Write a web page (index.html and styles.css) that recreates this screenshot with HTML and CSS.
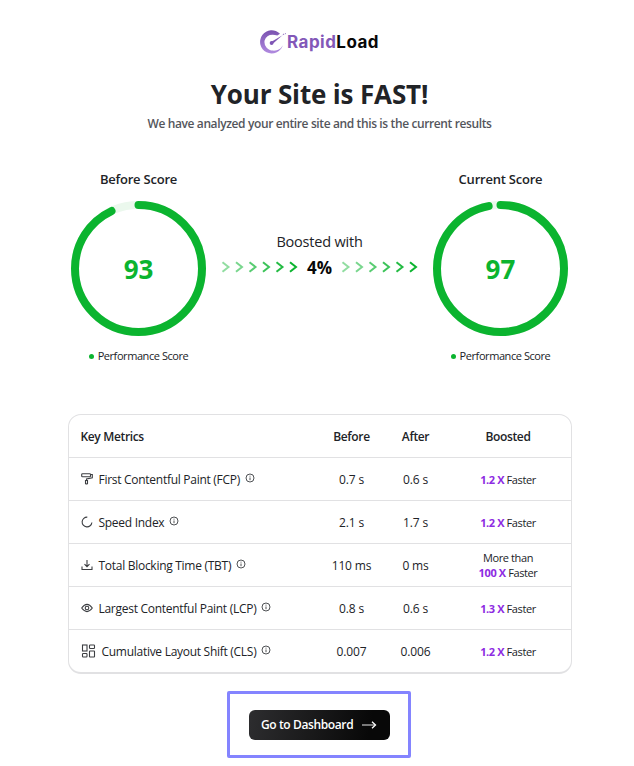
FILE: index.html
```html
<!DOCTYPE html>
<html lang="en">
<head>
<meta charset="utf-8">
<title>RapidLoad</title>
<link rel="stylesheet" href="styles.css">
</head>
<body>
<svg class="defs" width="0" height="0" aria-hidden="true">
  <symbol id="info" viewBox="0 0 10 10"><circle cx="5" cy="5" r="4" /><path d="M5 4.5v2.7M5 2.7v.9" /></symbol>
  <symbol id="chevrons" viewBox="0 0 77 12">
    <path opacity=".45" d="M1.5 1.2l6 4.8-6 4.8" /><path opacity=".55" d="M15 1.2l6 4.8-6 4.8" /><path opacity=".68" d="M28.5 1.2l6 4.8-6 4.8" /><path opacity=".8" d="M42 1.2l6 4.8-6 4.8" /><path opacity=".9" d="M55.5 1.2l6 4.8-6 4.8" /><path d="M69 1.2l6 4.8-6 4.8" />
  </symbol>
</svg>
<main class="page">
  <div class="logo">
    <svg class="logo-mark" width="27" height="26" viewBox="0 0 27 26">
      <defs><linearGradient id="lg" x1="0" y1="0" x2="0" y2="1"><stop offset="0" stop-color="#7a52b0" /><stop offset="1" stop-color="#b18be0" /></linearGradient></defs>
      <path fill="url(#lg)" d="M20 4.800A11.600 11.600 0 1 0 22.800 16.200Q20 22 13 21.600A8.600 8.600 0 0 1 4.600 11.500Q7 3.900 17.300 6.400Z" />
      <path fill="#7f56b5" d="M11 13L22.500 6.200L12.500 15Z" /><circle cx="11.600" cy="14" r="1.900" fill="#7f56b5" />
      <path fill="none" stroke="#8b66bd" stroke-width="1" d="M22.800 5.700l1.200-.7M24.800 5l1-.5" />
    </svg>
    <span class="logo-text"><span class="rapid">Rapid</span>Load</span>
  </div>
  <h1>Your Site is FAST!</h1>
  <p class="subtitle">We have analyzed your entire site and this is the current results</p>
  <section class="scores">
    <div class="score">
      <h2>Before Score</h2>
      <div class="gauge">
        <svg width="135" height="135" viewBox="0 0 135 135"><circle class="track" cx="67.5" cy="67.5" r="63.5" /><circle class="value" cx="67.5" cy="67.5" r="63.5" pathLength="100" stroke-dasharray="93 100" transform="rotate(-90 67.5 67.5)" /></svg>
        <strong>93</strong>
      </div>
      <p class="legend"><i></i><span>Performance Score</span></p>
    </div>
    <div class="boost">
      <p>Boosted with</p>
      <div class="boost-row"><svg class="chevrons" width="77" height="12"><use href="#chevrons" /></svg><strong>4%</strong><svg class="chevrons" width="77" height="12"><use href="#chevrons" /></svg></div>
    </div>
    <div class="score">
      <h2>Current Score</h2>
      <div class="gauge">
        <svg width="135" height="135" viewBox="0 0 135 135"><circle class="track" cx="67.5" cy="67.5" r="63.5" /><circle class="value" cx="67.5" cy="67.5" r="63.5" pathLength="100" stroke-dasharray="97 100" transform="rotate(-90 67.5 67.5)" /></svg>
        <strong>97</strong>
      </div>
      <p class="legend"><i></i><span>Performance Score</span></p>
    </div>
  </section>
  <section class="metrics">
    <div class="row head"><span>Key Metrics</span><span>Before</span><span>After</span><span>Boosted</span></div>
    <div class="row">
      <div class="name"><svg class="icon" width="12" height="12" viewBox="0 0 12 12"><rect x=".7" y=".7" width="8.8" height="3" rx=".8" /><path d="M9.500 1.500h1.800v3.200L5.500 6v1.500M4.500 7.500h2v3q-1 1-2 0z" /></svg><span>First Contentful Paint (FCP)</span><svg class="info" width="10" height="10"><use href="#info" /></svg></div>
      <span>0.7 s</span><span>0.6 s</span><span class="gain"><b>1.2 X</b> Faster</span>
    </div>
    <div class="row">
      <div class="name"><svg class="icon" width="12" height="12" viewBox="0 0 12 12"><path d="M6.300 1.100A4.900 4.900 0 1 0 10.900 6.500" /></svg><span>Speed Index</span><svg class="info" width="10" height="10"><use href="#info" /></svg></div>
      <span>2.1 s</span><span>1.7 s</span><span class="gain"><b>1.2 X</b> Faster</span>
    </div>
    <div class="row">
      <div class="name"><svg class="icon" width="12" height="12" viewBox="0 0 12 12"><path d="M6 1v6.500M3.500 5.200L6 7.700l2.500-2.500M1 7.500v3h10v-3" /></svg><span>Total Blocking Time (TBT)</span><svg class="info" width="10" height="10"><use href="#info" /></svg></div>
      <span>110 ms</span><span>0 ms</span><span class="gain">More than<br><b>100 X</b> Faster</span>
    </div>
    <div class="row">
      <div class="name"><svg class="icon" width="12" height="12" viewBox="0 0 12 12"><path d="M.7 6Q6-1.200 11.300 6Q6 13.200.7 6z" /><circle cx="6" cy="6" r="1.800" /></svg><span>Largest Contentful Paint (LCP)</span><svg class="info" width="10" height="10"><use href="#info" /></svg></div>
      <span>0.8 s</span><span>0.6 s</span><span class="gain"><b>1.3 X</b> Faster</span>
    </div>
    <div class="row">
      <div class="name"><svg class="icon layout" width="15" height="14" viewBox="0 0 15 14"><rect x="1.500" y="1" width="4.500" height="6" /><rect x="8.500" y="1" width="5" height="3.500" rx=".7" /><rect x="1.500" y="9.500" width="4.500" height="3.500" rx=".7" /><rect x="8.500" y="7" width="5" height="6" rx=".5" /></svg><span>Cumulative Layout Shift (CLS)</span><svg class="info" width="10" height="10"><use href="#info" /></svg></div>
      <span>0.007</span><span>0.006</span><span class="gain"><b>1.2 X</b> Faster</span>
    </div>
  </section>
  <div class="focus">
    <button type="button"><span>Go to Dashboard</span><svg width="16" height="10" viewBox="0 0 16 10"><path opacity=".7" d="M1 5h13" /><path d="M11 1.800L14.500 5 11 8.200" /></svg></button>
  </div>
</main>
</body>
</html>
```
FILE: styles.css
```css
* { box-sizing: border-box; }
body { margin: 0; background: #fff; color: #212327; font-family: "Open Sans", "Noto Sans", sans-serif; }
h1, h2, p { margin: 0; }
.defs { position: absolute; }
.page { width: 634px; height: 766px; padding-left: 5px; display: flex; flex-direction: column; align-items: center; overflow: hidden; }
span, p, h1, h2 { white-space: nowrap; }

.logo { display: flex; height: 27px; margin-top: 28px; align-items: center; }
.logo-text { font: 700 17px/27px "Inter", sans-serif; color: #080808; letter-spacing: .45px; padding-top: 1px; }
.rapid { color: #8358b8; }
h1 { margin-top: 19px; font-size: 26px; line-height: 40px; font-weight: 700; letter-spacing: -.15px; }
.subtitle { margin-top: 1px; font-size: 12px; line-height: 18px; font-weight: 600; letter-spacing: -.38px; color: #54565c; }

.scores { width: 501px; margin-top: 36px; display: flex; justify-content: space-between; }
.score { width: 139px; display: flex; flex-direction: column; align-items: center; }
.score h2 { font-size: 13px; line-height: 20px; font-weight: 600; letter-spacing: -.22px; }
.gauge { display: grid; place-items: center; margin-top: 12px; }
.gauge > * { grid-area: 1 / 1; }
.gauge svg { display: block; }
.gauge circle { fill: none; stroke-width: 8; }
.track { stroke: #ebf8ed; }
.value { stroke: #0bb42f; stroke-linecap: round; }
.gauge strong { font-size: 26px; line-height: 34px; color: #0bb42f; }
.legend { display: flex; align-items: center; gap: 4px; margin-top: 12px; font-size: 11px; line-height: 16px; letter-spacing: -.43px; }
.legend i { width: 5px; height: 5px; border-radius: 50%; background: #0bb42f; }
.boost { display: flex; flex-direction: column; align-items: center; padding-top: 63px; }
.boost p { font-size: 14.500px; line-height: 20px; letter-spacing: -.2px; }
.boost-row { display: flex; align-items: center; gap: 9px; height: 26px; margin-top: 2px; }
.boost-row strong { font-size: 17px; line-height: 26px; margin-top: 2px; color: #080808; }
.chevrons { fill: none; stroke: #0bb42f; stroke-width: 2; }

.metrics { width: 504px; height: 260px; margin-top: 50px; border: 1px solid #e1e1e3; border-bottom-width: 2px; border-radius: 13px; }
.row { height: 43px; display: grid; grid-template-columns: 251px 64px 64px 121px; align-items: center; text-align: center; font-size: 12px; letter-spacing: -.15px; border-top: 1px solid #e1e1e3; }
.head { border-top: 0; height: 42px; font-weight: 600; font-size: 12px; letter-spacing: -.35px; }
.head > :first-child { text-align: left; padding-left: 12px; }
.name { display: flex; align-items: center; padding-left: 12px; letter-spacing: -.28px; }
.icon, .info { fill: none; stroke: #3c3e42; stroke-width: 1.100; flex: none; }
.icon { margin-right: 6px; }
.layout { margin-right: 6px; }
.info { margin: -2px 0 0 5px; stroke-width: .9; }
.gain { font-size: 11px; line-height: 15px; font-weight: 500; letter-spacing: -.4px; }
.gain b { color: #8d2be2; }

.focus { width: 184px; height: 67px; margin: 17px 1px 0 0; padding-left: 19px; border: 3px solid #8484ff; border-radius: 2px; display: flex; align-items: center; }
button { width: 141px; height: 30px; padding: 0 0 0 12px; border: 0; border-radius: 6px; display: flex; align-items: center; gap: 8px; color: #fff; background: linear-gradient(100deg, #2d2d2f, #080808 85%); font: 600 12px/30px "Open Sans", sans-serif; letter-spacing: -.38px; }
button span { padding-top: 1px; }
button svg { fill: none; stroke: #fff; stroke-width: 1.300; }
```
